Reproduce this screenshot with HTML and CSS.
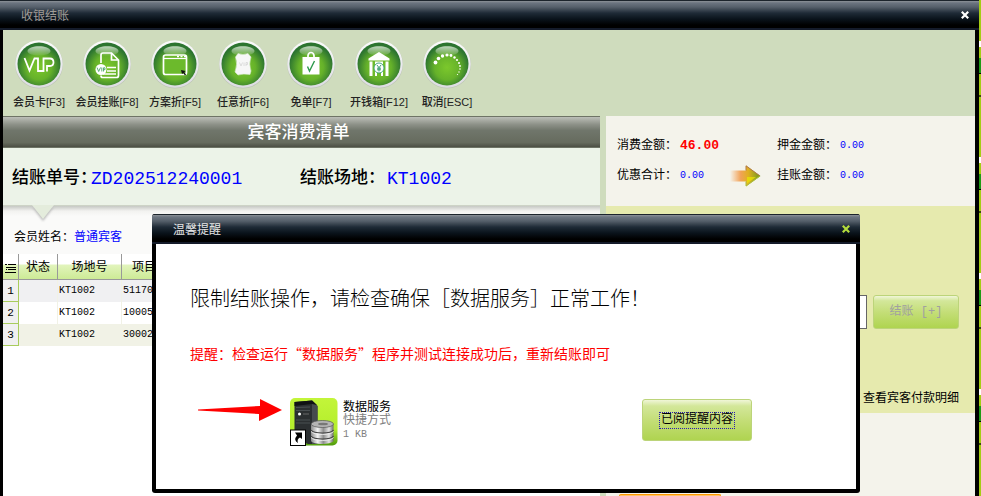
FILE: index.html
```html
<!DOCTYPE html>
<html lang="zh-CN">
<head>
    <meta charset="UTF-8">
    <meta name="viewport" content="width=device-width, initial-scale=1.0">
    <title>收银结账</title>
    <link rel="stylesheet" href="styles.css">
</head>
<body>
    <!-- shared icon parts -->
    <svg width="0" height="0" class="defs" aria-hidden="true">
        <defs>
            <radialGradient id="ball" cx="50%" cy="58%" r="52%">
                <stop offset="0" stop-color="#7cc82c"/>
                <stop offset="0.55" stop-color="#66b22a"/>
                <stop offset="1" stop-color="#2c7430"/>
            </radialGradient>
            <linearGradient id="rim" x1="0" y1="0" x2="0" y2="1">
                <stop offset="0" stop-color="#fbfbfb"/>
                <stop offset="1" stop-color="#dcdce2"/>
            </linearGradient>
            <linearGradient id="gloss" x1="0" y1="0" x2="0" y2="1">
                <stop offset="0" stop-color="#fff" stop-opacity="0.7"/>
                <stop offset="1" stop-color="#fff" stop-opacity="0.08"/>
            </linearGradient>
            <linearGradient id="arrow" x1="0" y1="0" x2="1" y2="0">
                <stop offset="0" stop-color="#f4a55c" stop-opacity="0"/>
                <stop offset="0.35" stop-color="#f2a257"/>
                <stop offset="0.6" stop-color="#e0b020"/>
                <stop offset="1" stop-color="#6d9a1c"/>
            </linearGradient>
            <linearGradient id="tile" x1="0" y1="0" x2="0" y2="1">
                <stop offset="0" stop-color="#c3f53a"/>
                <stop offset="0.65" stop-color="#b4ee2c"/>
                <stop offset="1" stop-color="#4f9a0c"/>
            </linearGradient>
            <linearGradient id="metal" x1="0" y1="0" x2="1" y2="0">
                <stop offset="0" stop-color="#8a8a8a"/>
                <stop offset="0.3" stop-color="#f4f4f4"/>
                <stop offset="0.55" stop-color="#8e8e8e"/>
                <stop offset="0.8" stop-color="#e2e2e2"/>
                <stop offset="1" stop-color="#6c6c6c"/>
            </linearGradient>
            <g id="disc">
                <circle cx="24" cy="24.5" r="24" fill="#bfc7b6"/>
                <circle cx="24" cy="24" r="23.7" fill="url(#rim)"/>
                <circle cx="24" cy="24" r="21.5" fill="url(#ball)"/>
                <path d="M12.500 11C13 4.500 35 4.500 35.500 11C35.500 17 12.500 17 12.500 11Z" fill="url(#gloss)"/>
            </g>
        </defs>
    </svg>

    <div class="window">
        <header class="titlebar">
            <h1>收银结账</h1>
            <button class="close" aria-label="关闭">
                <svg width="8" height="8" viewBox="0 0 8 8"><path d="M0.800 0.800L7.200 7.200M7.200 0.800L0.800 7.200"/></svg>
            </button>
        </header>

        <div class="window-body">
            <nav class="toolbar">
                <button class="tool">
                    <svg width="48" height="49" viewBox="0 0 48 49"><use href="#disc"/>
                        <path d="M9.500 18L14.500 30.500L19.500 18.500H23V31H28.500V18.500H35Q38.500 18.500 38.500 22.300Q38.500 26 35 26H32V31.500" fill="none" stroke="#fff" stroke-width="1.800"/>
                    </svg>
                    <span>会员卡[F3]</span>
                </button>
                <button class="tool">
                    <svg width="48" height="49" viewBox="0 0 48 49"><use href="#disc"/>
                        <path d="M18 23V15Q18 13 20 13H28.500L35.500 20V35.500Q35.500 37.500 33.500 37.500H19.500Q18 37.500 18 35.500M28.500 13V20H35.500M24 27.500H33M24 31H33M20 34H33" fill="none" stroke="#fff" stroke-width="1.700"/>
                        <circle cx="18" cy="29.500" r="5.500" fill="#fff"/>
                        <path d="M14 27.500L15.700 31.500L17.500 27.500M18.800 27.500V31.500M20.500 31.500V27.800H22V29.700H20.500" fill="none" stroke="#4ba56a" stroke-width="0.900"/>
                    </svg>
                    <span>会员挂账[F8]</span>
                </button>
                <button class="tool">
                    <svg width="48" height="49" viewBox="0 0 48 49"><use href="#disc"/>
                        <rect x="12.500" y="15" width="23" height="19.500" rx="2" fill="#6cba2c" stroke="#fff" stroke-width="1.700"/>
                        <path d="M12.500 18.500H35.500" stroke="#fff" stroke-width="1.200"/>
                        <path d="M26 16.500H28M29.500 16.500H31.500M33 16.500H35" stroke="#fff" stroke-width="1.300"/>
                        <path d="M30 30L31 34L32.300 33L34 35.500L35 34.500L33.300 32.200L34.500 31Z" fill="#111"/>
                    </svg>
                    <span>方案折[F5]</span>
                </button>
                <button class="tool">
                    <svg width="48" height="49" viewBox="0 0 48 49"><use href="#disc"/>
                        <path d="M19 13.500Q24 15.500 29 13.500L32 17Q29.500 24 32 31L31 34.500Q24 33.500 19 35L16 32Q19 24 16.500 17Z" fill="#f7f7f7" stroke="#d9ead0" stroke-width="0.600"/>
                        <path d="M20.500 22.500L22 26L23.500 22.500M25 22.500V26M27 26V22.500H28.500V24.500H27" fill="none" stroke="#d5d5d5" stroke-width="0.800"/>
                    </svg>
                    <span>任意折[F6]</span>
                </button>
                <button class="tool">
                    <svg width="48" height="49" viewBox="0 0 48 49"><use href="#disc"/>
                        <path d="M15.500 17H32.500V34.500H15.500Z" fill="#fff"/>
                        <path d="M21 17V15.500Q21.500 12.500 24 12.500Q26.500 12.500 27 15.500V17" fill="none" stroke="#fff" stroke-width="1.700"/>
                        <path d="M20.500 26.500L22.500 31L27.500 21" fill="none" stroke="#2f9a4e" stroke-width="1.400"/>
                    </svg>
                    <span>免单[F7]</span>
                </button>
                <button class="tool">
                    <svg width="48" height="49" viewBox="0 0 48 49"><use href="#disc"/>
                        <path d="M24 12L34.500 18.500V20.500H13.500V18.500ZM14.500 21.500H17.500V36H14.500ZM20 21.500H28V24H20ZM20 31H22V36H20ZM26 31H28V36H26ZM30.500 21.500H33.500V36H30.500Z" fill="#fff"/>
                        <circle cx="24" cy="28" r="5" fill="#fff" stroke="#36a078" stroke-width="0.900"/>
                        <path d="M22 25L24 27.700L26 25M24 27.700V31.500M22 28.200H26M22 29.800H26" fill="none" stroke="#279460" stroke-width="0.900"/>
                    </svg>
                    <span>开钱箱[F12]</span>
                </button>
                <button class="tool">
                    <svg width="48" height="49" viewBox="0 0 48 49"><use href="#disc"/>
                        <g fill="#fff">
                            <circle cx="12.500" cy="22.500" r="1.900"/><circle cx="15.500" cy="18.500" r="1.800"/>
                            <circle cx="19.500" cy="16" r="1.700"/><circle cx="24" cy="15" r="1.600"/>
                            <circle cx="28" cy="15.500" r="1.400"/><circle cx="31.500" cy="17.500" r="1.200"/>
                            <circle cx="34" cy="20" r="1.100"/><circle cx="36" cy="23" r="1"/>
                            <circle cx="37" cy="26" r="0.900"/><circle cx="37" cy="29" r="0.800"/>
                            <circle cx="36" cy="32" r="0.700"/><circle cx="34.500" cy="34.500" r="0.600"/>
                        </g>
                    </svg>
                    <span>取消[ESC]</span>
                </button>
            </nav>

            <main class="columns">
                <section class="bill">
                    <h2>宾客消费清单</h2>
                    <div class="bill-info">
                        <span>结账单号：</span><b>ZD202512240001</b>
                        <span>结账场地：</span><b>KT1002</b>
                    </div>
                    <p class="member">会员姓名：<span>普通宾客</span></p>
                    <table class="items">
                        <thead>
                            <tr>
                                <th class="col-no" aria-label="序号">
                                    <svg width="11" height="10" viewBox="0 0 11 10"><path d="M0 1.500H2M3 1.500H11M1 4.500H11M1 6.500H2M3 6.500H11M0 9.500H11" stroke="#000"/></svg>
                                </th>
                                <th class="col-state">状态</th>
                                <th class="col-place">场地号</th>
                                <th class="col-item">项目</th>
                            </tr>
                        </thead>
                        <tbody>
                            <tr><th>1</th><td></td><td>KT1002</td><td>51170</td></tr>
                            <tr><th>2</th><td></td><td>KT1002</td><td>10005</td></tr>
                            <tr><th>3</th><td></td><td>KT1002</td><td>30002</td></tr>
                        </tbody>
                    </table>
                </section>

                <section class="payment">
                    <div class="totals">
                        <span>消费金额：</span><b class="due">46.00</b>
                        <span></span>
                        <span>押金金额：</span><b>0.00</b>
                        <span>优惠合计：</span><b>0.00</b>
                        <svg width="32" height="22" viewBox="0 0 32 22">
                            <path d="M0 5.500H16V0.500L30.500 11L16 21.500V16.500H0Z" fill="url(#arrow)"/>
                            <path d="M16 5.500V0.800L30 11" fill="none" stroke="#b07a48"/>
                            <path d="M16 16.500V21L30 11" fill="none" stroke="#a8c040"/>
                            <path d="M17 12H26L17 18.500Z" fill="#e8e800" opacity="0.700"/>
                        </svg>
                        <span>挂账金额：</span><b>0.00</b>
                    </div>
                    <div class="pay">
                        <div class="pay-row">
                            <input type="text" class="amount" aria-label="结账金额">
                            <button class="btn" disabled>结账 [+]</button>
                        </div>
                        <a href="#" class="detail">查看宾客付款明细</a>
                    </div>
                    <div class="more">
                        <button class="btn-orange" aria-label="更多"></button>
                    </div>
                </section>
            </main>
        </div>
    </div>
    <div class="desktop-edge"></div>

    <div class="dialog" role="dialog" aria-labelledby="dialog-title">
        <div class="titlebar">
            <h2 id="dialog-title">温馨提醒</h2>
            <button class="close" aria-label="关闭">
                <svg width="8" height="8" viewBox="0 0 8 8"><path d="M0.800 0.800L7.200 7.200M7.200 0.800L0.800 7.200"/></svg>
            </button>
        </div>
        <div class="dialog-body">
            <p class="message">限制结账操作，请检查确保［数据服务］正常工作！</p>
            <p class="hint">提醒：检查运行“数据服务”程序并测试连接成功后，重新结账即可</p>
            <div class="dialog-foot">
                <svg width="84" height="24" viewBox="0 0 84 24"><path d="M0 11.500V12.500L61 16V23L84 12L62 1V8Z" fill="#f00"/></svg>
                <div class="shortcut">
                    <svg width="48" height="48" viewBox="0 0 48 48">
                        <rect width="47.500" height="47.500" rx="5" fill="url(#tile)"/>
                        <path d="M4.500 4L22 2.500L27.500 8V46H18L4.500 40Z" fill="#2b2f31"/>
                        <path d="M22 2.500L27.500 8V46H22Z" fill="#464b4e"/>
                        <path d="M4.500 4L22 2.500L27 7L22 6L4.500 8Z" fill="#101214"/>
                        <path d="M6 9.500L20 9M6 12.500H20M6 22H20M6 25H20" stroke="#52585b" stroke-width="0.800"/>
                        <circle cx="9.500" cy="16" r="1.500" fill="#fff"/>
                        <path d="M13 16H19" stroke="#777" stroke-width="0.800"/>
                        <path d="M21 26V43C23 47 41 47 43.500 43V26Z" fill="url(#metal)"/>
                        <ellipse cx="32.300" cy="26" rx="11.200" ry="3.500" fill="#b4b4b4" stroke="#555" stroke-width="0.700"/>
                        <ellipse cx="33" cy="26" rx="5" ry="1.300" fill="#777"/>
                        <path d="M21 32C24 36 41 36 43.500 32M21 38C24 42 41 42 43.500 38" fill="none" stroke="#444" stroke-width="1.200"/>
                        <path d="M21 33.500C24 37.500 41 37.500 43.500 33.500M21 39.500C24 43.500 41 43.500 43.500 39.500" fill="none" stroke="#f2f2f2" stroke-width="0.800"/>
                        <rect x="0.500" y="32" width="15" height="15.500" fill="#fff" stroke="#000"/>
                        <path d="M5 34.500H12V41L10 39.500Q6.500 41 8 45Q3 42 7 37.500Z" fill="#000"/>
                    </svg>
                    <div class="file">
                        <strong>数据服务</strong>
                        <span>快捷方式</span>
                        <span class="size">1 KB</span>
                    </div>
                </div>
                <button class="btn btn-ok"><span>已阅提醒内容</span></button>
            </div>
        </div>
    </div>
</body>
</html>
```
FILE: styles.css
```css
* {
    box-sizing: border-box;
}
body {
    display: flex;
    position: relative;
    height: 100vh;
    margin: 0;
    overflow: hidden;
    background: #000;
    color: #000;
    font-family: "Liberation Mono", "Noto Sans CJK SC", monospace;
    font-size: 12px;
    line-height: 16px;
}
h1, h2, p {
    margin: 0;
    font-weight: normal;
}
b, strong {
    font-weight: normal;
}
button {
    padding: 0;
    border: 0;
    background: none;
    font: inherit;
    color: inherit;
}
svg {
    display: block;
    flex: none;
}
.defs {
    position: absolute;
}

/* window frame */
.window {
    display: flex;
    flex-direction: column;
    flex: 1;
    min-width: 0;
}
.titlebar {
    display: flex;
    align-items: center;
    justify-content: space-between;
    height: 30px;
    padding: 0 10px 0 21px;
    border-top: 1px solid #1c242c;
    border-bottom: 2px solid #141b2a;
    background: linear-gradient(#8c9298 0, #6b7480 2px, #56606b 6px, #1f2b37 12px, #0a131b 18px, #000 24px);
    flex: none;
}
.titlebar h1,
.titlebar h2 {
    padding-top: 4px;
    font-size: 12px;
    line-height: 16px;
    color: #a09c98;
}
.titlebar .close path {
    stroke: #fff;
    stroke-width: 2.2;
}
.window-body {
    display: flex;
    flex-direction: column;
    flex: 1;
    min-height: 0;
    border-left: 3px solid #000;
    border-right: 4px solid #000;
    background: #cfdcbd;
}
.desktop-edge {
    width: 2px;
    background: linear-gradient(#a5cc14 11px, #1f9a14 11px, #1f9a14 26px, #000 26px, #000 27px, #a5cc14 27px, #a5cc14 48px, #3c4a08 48px, #3c4a08 50px, #a5cc14 50px, #a5cc14 110px, #fff 110px) 0 47px / 2px 116px;
}

/* toolbar */
.toolbar {
    display: flex;
    height: 86px;
    padding: 10px 2px 0;
    flex: none;
}
.tool {
    display: flex;
    flex-direction: column;
    align-items: center;
    gap: 5px;
    width: 68px;
    font: 500 11px/16px "Liberation Sans", "Noto Sans CJK SC", sans-serif;
    color: #222;
    white-space: nowrap;
}

.columns {
    display: grid;
    grid-template-columns: 597fr 369fr;
    gap: 6px;
    flex: 1;
    min-height: 0;
}

/* bill */
.bill {
    background: #fff;
}
.bill h2 {
    height: 32px;
    padding: 1px 6px 0 0;
    border-top: 1px solid #6e7466;
    border-bottom: 1px solid #6e7466;
    background: linear-gradient(#bcbfb8, #8d9188 25%, #70766b 45%, #666b5e 85%, #4c4f44);
    color: #fff;
    font-size: 17px;
    line-height: 32px;
    text-align: center;
    font-weight: 500;
}
.bill-info {
    display: grid;
    grid-template-columns: 79px 209px 87px auto;
    align-items: center;
    position: relative;
    height: 58px;
    padding: 4px 0 0 9px;
    border-bottom: 1px solid #cdd3c6;
    background: #ecf3e8;
    font-size: 17px;
    font-weight: 500;
    white-space: nowrap;
}
.bill-info b {
    color: #00f;
    font-size: 18px;
}
.bill-info::after {
    content: "";
    position: absolute;
    left: 29px;
    top: 57px;
    border: 11px solid transparent;
    border-top: 14px solid #e4ecdc;
    border-bottom: 0;
    filter: drop-shadow(0 2px 1px #bbb);
}
.member {
    height: 48px;
    padding: 24px 11px 0;
    background: linear-gradient(#c6c8c4, #f2f2f0 5px, #fafaf9 10px);
}
.member span {
    color: #00f;
}
.items {
    width: 100%;
    border-collapse: separate;
    border-spacing: 0;
    table-layout: fixed;
}
.items th {
    padding: 0;
    font-weight: normal;
}
.items thead th {
    height: 26px;
    padding-top: 2px;
    border-right: 1px solid #999;
    border-bottom: 1px solid #999;
    background: linear-gradient(#fff 0, #fff 10px, #e2f4bc 11px, #cdeb96 100%);
}
.items .col-no {
    width: 16px;
}
.items .col-no svg {
    margin: 0 auto;
}
.items .col-state {
    width: 39px;
}
.items .col-place {
    width: 64px;
}
.items thead .col-item {
    padding-left: 10px;
    text-align: left;
}
.items tbody th {
    border-right: 1px solid #a8cc5c;
    border-bottom: 1px solid #a8cc5c;
    background: #f0f0f0;
    font-size: 11px;
}
.items td {
    height: 22px;
    padding: 0 1px;
    border-right: 1px solid #f1f2e6;
    font-size: 10px;
}
.items tbody tr:nth-child(1) td {
    background: #f0f0f2;
}
.items tbody tr:nth-child(3) td {
    background: #f1f2e6;
}

/* payment side */
.payment {
    display: flex;
    flex-direction: column;
    min-height: 0;
    background: #f4f3eb;
    overflow: hidden;
}
.totals {
    display: grid;
    grid-template-columns: 63px 50px 47px 63px auto;
    grid-auto-rows: 30px;
    align-items: center;
    height: 90px;
    padding: 15px 11px;
    white-space: nowrap;
    flex: none;
}
.totals b {
    color: #00f;
    font-size: 10px;
}
.totals .due {
    color: #f00;
    font-size: 13px;
    font-weight: bold;
}
.pay {
    display: flex;
    flex-direction: column;
    align-items: flex-end;
    justify-content: space-between;
    height: 207px;
    padding: 89px 16px 6px;
    background: #e6eaae;
    flex: none;
}
.pay-row {
    display: flex;
    gap: 6px;
}
.amount {
    width: 200px;
    height: 34px;
    border: 1px solid #666;
    background: #fff;
}
.btn {
    width: 86px;
    height: 34px;
    border: 1px solid #bcd47a;
    border-radius: 3px;
    background: linear-gradient(#f0f6d8 0, #d3e79a 15%, #c4de78 50%, #afd450 100%);
}
.btn:disabled {
    color: #a0a0a0;
}
.detail {
    color: #000;
    text-decoration: none;
}
.more {
    display: flex;
    flex: 1;
    min-height: 0;
    padding: 81px 13px 0;
}
.btn-orange {
    width: 102px;
    border: 1px solid #f90;
    border-bottom: 0;
    border-radius: 3px 3px 0 0;
    background: #ffc266;
}

/* reminder dialog */
.dialog {
    position: absolute;
    top: 214px;
    left: 152px;
    width: 708px;
    border-bottom: 4px solid #000;
    border-radius: 3px;
    background: #000;
    overflow: hidden;
}
.dialog .titlebar h2 {
    color: #e6e6e6;
}
.dialog .titlebar .close path {
    stroke: #b4dc3c;
}
.dialog-body {
    height: 245px;
    margin: 0 4px;
    padding: 40px 34px 0;
    background: #fff;
}
.message {
    font-size: 20px;
    line-height: 28px;
    font-weight: 300;
}
.hint {
    margin-top: 31px;
    color: #f00;
    font-size: 14px;
    line-height: 20px;
}
.message,
.hint {
    font-family: "Noto Sans CJK SC", sans-serif;
    white-space: nowrap;
}
.dialog-foot {
    display: flex;
    align-items: flex-start;
    margin-top: 35px;
    padding: 0 70px 0 8px;
}
.shortcut {
    display: flex;
    gap: 5px;
    margin-left: 8px;
}
.file {
    display: flex;
    flex-direction: column;
    padding-top: 4px;
    line-height: 13px;
    color: #808080;
}
.file strong {
    color: #000;
}
.file .size {
    font-size: 10px;
}
.btn-ok {
    width: 110px;
    height: 42px;
    margin: 1px 0 0 auto;
}
.btn-ok span {
    display: inline-block;
    padding: 0 1px;
    border: 1px dotted #2a1ab0;
    line-height: 15px;
}
```
